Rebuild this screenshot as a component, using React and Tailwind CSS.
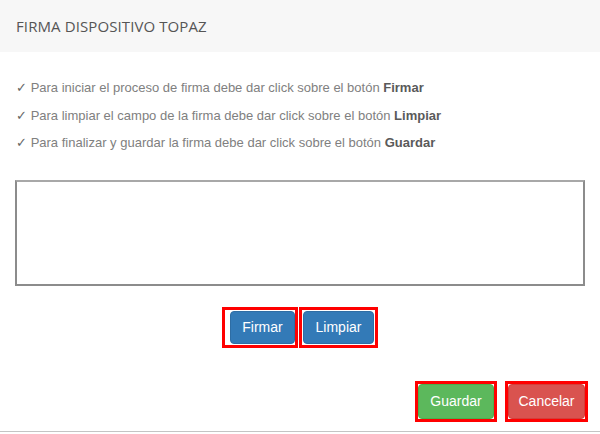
export default function App() {
  const steps = [
    ['Para iniciar el proceso de firma debe dar click sobre el botón ', 'Firmar'],
    ['Para limpiar el campo de la firma debe dar click sobre el botón ', 'Limpiar'],
    ['Para finalizar y guardar la firma debe dar click sobre el botón ', 'Guardar'],
  ];

  return (
    <div className="w-[600px] h-[434px] bg-white flex flex-col overflow-hidden">
      {/* Header */}
      <div className="h-[52px] bg-[#f7f7f7] flex items-center pl-4 shrink-0">
        <h4 className="text-[15px] text-[#555] font-['Open_Sans',sans-serif] tracking-[0.1px]">
          FIRMA DISPOSITIVO TOPAZ
        </h4>
      </div>

      {/* Instructions */}
      <div className="pl-4 pt-[27px] flex flex-col gap-[10px] font-['Liberation_Sans',Arial,sans-serif] text-[13px] text-[#808080] leading-[17.5px]">
        {steps.map(([text, bold]) => (
          <p key={bold}>
            <span className="text-[#666]">✓</span> {text}
            <b className="text-[#5a5a5a]">{bold}</b>
          </p>
        ))}
      </div>

      {/* Signature box */}
      <div className="mx-[15px] mt-[28px] h-[106px] border-2 border-[#8c8c8c] border-t-[#a8a8a8] bg-white" />

      {/* Firmar / Limpiar */}
      <div className="flex justify-center gap-[1px] mt-[21px] font-['Liberation_Sans',Arial,sans-serif]">
        <div className="border-[3px] border-[#ff0000] pl-[5px] pt-[1px] pb-[1px]">
          <button className="h-[33px] w-[65px] bg-[#337ab7] border border-[#2e6da4] rounded text-white text-[14px]">
            Firmar
          </button>
        </div>
        <div className="border-[3px] border-[#ff0000] p-[1px]">
          <button className="h-[33px] w-[71px] bg-[#337ab7] border border-[#2e6da4] rounded text-white text-[14px]">
            Limpiar
          </button>
        </div>
      </div>

      {/* Footer */}
      <div className="flex justify-end gap-[8px] pr-3 mt-[33px] font-['Liberation_Sans',Arial,sans-serif]">
        <div className="border-[3px] border-[#ff0000]">
          <button className="h-[35px] w-[76px] bg-[#5cb85c] border border-[#4cae4c] rounded-sm text-white text-[14px]">
            Guardar
          </button>
        </div>
        <div className="border-[3px] border-[#ff0000]">
          <button className="h-[35px] w-[77px] bg-[#d9534f] border border-[#d43f3a] rounded-sm text-white text-[14px]">
            Cancelar
          </button>
        </div>
      </div>

      <div className="mt-auto mb-[2px] h-[1px] bg-[#c4c4c4]" />
    </div>
  );
}
